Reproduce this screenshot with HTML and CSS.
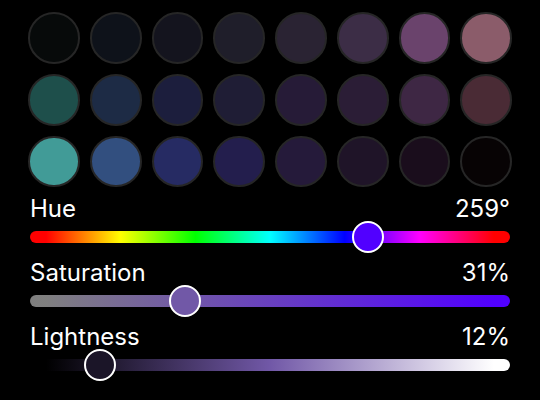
FILE: index.html
```html
<!DOCTYPE html>
<html lang="en">
<head>
<meta charset="utf-8">
<title>Color picker</title>
<link rel="stylesheet" href="styles.css">
</head>
<body>
<main class="picker">
  <div class="swatches">
    <button class="swatch" style="background:#070a0a"></button>
    <button class="swatch" style="background:#0e121a"></button>
    <button class="swatch" style="background:#14141e"></button>
    <button class="swatch" style="background:#1f1e2a"></button>
    <button class="swatch" style="background:#2a2333"></button>
    <button class="swatch" style="background:#3c2d46"></button>
    <button class="swatch" style="background:#6a436c"></button>
    <button class="swatch" style="background:#8b5c6a"></button>

    <button class="swatch" style="background:#1e4f4b"></button>
    <button class="swatch" style="background:#1d2b45"></button>
    <button class="swatch" style="background:#1c1e3d"></button>
    <button class="swatch" style="background:#1f1d35"></button>
    <button class="swatch" style="background:#261b37"></button>
    <button class="swatch" style="background:#2b1d36"></button>
    <button class="swatch" style="background:#3e2744"></button>
    <button class="swatch" style="background:#4a2b35"></button>

    <button class="swatch" style="background:#419b97"></button>
    <button class="swatch" style="background:#324f7f"></button>
    <button class="swatch" style="background:#262b63"></button>
    <button class="swatch" style="background:#231e4d"></button>
    <button class="swatch" style="background:#251a3a"></button>
    <button class="swatch" style="background:#1f1428"></button>
    <button class="swatch" style="background:#1a0d1c"></button>
    <button class="swatch" style="background:#070304"></button>
  </div>

  <div class="sliders">
    <div class="control">
      <div class="label-row"><span>Hue</span><span>259°</span></div>
      <div class="slider">
        <div class="track track-hue"></div>
        <div class="thumb thumb-hue" style="left:calc(16px + (100% - 32px) * 0.7194)"></div>
      </div>
    </div>
    <div class="control">
      <div class="label-row"><span>Saturation</span><span>31%</span></div>
      <div class="slider">
        <div class="track track-sat"></div>
        <div class="thumb thumb-sat" style="left:calc(16px + (100% - 32px) * 0.31)"></div>
      </div>
    </div>
    <div class="control">
      <div class="label-row"><span>Lightness</span><span>12%</span></div>
      <div class="slider">
        <div class="track track-light"></div>
        <div class="thumb thumb-light" style="left:calc(16px + (100% - 32px) * 0.12)"></div>
      </div>
    </div>
  </div>
</main>
</body>
</html>
```

FILE: styles.css
```css
* { box-sizing: border-box; }

html, body {
  margin: 0;
  background: #000;
}

body {
  font-family: Inter, "Noto Sans", sans-serif;
  color: #fff;
}

.picker {
  padding: 12px 28px 0;
  display: flex;
  flex-direction: column;
  gap: 10px;
}

.swatches {
  display: grid;
  grid-template-columns: repeat(8, 1fr);
  gap: 10px;
}

.swatch {
  display: block;
  width: 100%;
  aspect-ratio: 1 / 1;
  padding: 0;
  margin: 0;
  border-radius: 50%;
  border: 2px solid #262626;
}

.sliders {
  padding: 0 2px;
  display: flex;
  flex-direction: column;
  gap: 8px;
}

.control {
  display: flex;
  flex-direction: column;
}

.label-row {
  display: flex;
  justify-content: space-between;
  font-size: 24px;
  line-height: 24px;
  height: 24px;
}

.slider {
  position: relative;
  height: 32px;
  display: flex;
  align-items: center;
}

.track {
  width: 100%;
  height: 12px;
  border-radius: 6px;
}

.track-hue {
  background: linear-gradient(to right,
    #ff0000 16px,
    #ffff00 calc(16px + (100% - 32px) / 6),
    #00ff00 calc(16px + (100% - 32px) * 2 / 6),
    #00ffff calc(16px + (100% - 32px) * 3 / 6),
    #0000ff calc(16px + (100% - 32px) * 4 / 6),
    #ff00ff calc(16px + (100% - 32px) * 5 / 6),
    #ff0000 calc(100% - 16px));
}

.track-sat {
  background: linear-gradient(to right,
    hsl(259, 0%, 50%) 16px,
    hsl(259, 100%, 50%) calc(100% - 16px));
}

.track-light {
  background: linear-gradient(to right,
    #000 16px,
    hsl(259, 31%, 50%) 50%,
    #fff calc(100% - 16px));
}

.thumb {
  position: absolute;
  top: 0;
  width: 32px;
  height: 32px;
  margin-left: -16px;
  border-radius: 50%;
  border: 2px solid #fff;
}

.thumb-hue { background: hsl(259, 100%, 50%); }
.thumb-sat { background: hsl(259, 31%, 50%); }
.thumb-light { background: hsl(259, 31%, 12%); }
```
